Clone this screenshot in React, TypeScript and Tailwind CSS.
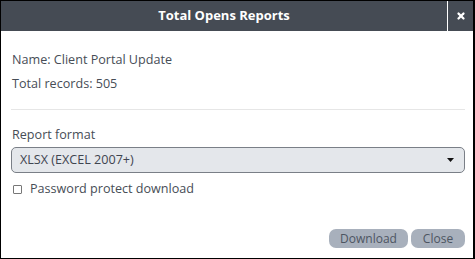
import { X } from 'lucide-react'

export default function App() {
  return (
    <div className="w-[475px] h-[259px] bg-white border border-black border-r-2 flex flex-col font-['Open_Sans',sans-serif] text-[#474d56]">
      {/* header */}
      <div className="h-[30px] bg-[#454b54] flex items-stretch shrink-0">
        <div className="flex-1 flex items-center justify-center text-white font-bold text-[13px]">
          Total Opens Reports
        </div>
        <div className="w-px bg-white" />
        <button className="w-[25px] flex items-center justify-center text-white">
          <X className="w-[10px] h-[10px]" strokeWidth={5.5} />
        </button>
      </div>

      <div className="flex-1 flex flex-col pl-[10px] pr-[8px] pt-[19px] text-[12.6px]">
        <div className="leading-[20px] pl-px">Name: Client Portal Update</div>
        <div className="leading-[20px] mt-1 pl-px">Total records: 505</div>

        <div className="h-px bg-[#e6e6e6] mt-[15px]" />

        <div className="leading-[20px] mt-[15px] pl-px">Report format</div>
        <div className="mt-[2px] h-[26px] rounded-[5px] border border-[#7a7f87] bg-[#e4e7eb] flex items-center justify-between pl-[8px] pr-[10px]">
          <span className="text-[#3f4550]">XLSX (EXCEL 2007+)</span>
          <svg width="7" height="4" viewBox="0 0 7 4">
            <path d="M0 0h7L3.5 4z" fill="#111" />
          </svg>
        </div>

        <label className="flex items-center gap-[8px] mt-[6px] leading-[20px]">
          <span className="w-[9px] h-[9px] ml-[2px] border border-[#777] rounded-[1px] bg-white" />
          Password protect download
        </label>

        <div className="flex-1" />

        <div className="flex justify-end gap-[3px] mb-[10px] text-[12px]">
          <button className="w-[79px] h-[19px] rounded-[7px] bg-[#a8b0bc] text-[#4d5562] leading-none">
            Download
          </button>
          <button className="w-[54px] h-[19px] rounded-[7px] bg-[#a8b0bc] text-[#4d5562] leading-none">
            Close
          </button>
        </div>
      </div>
    </div>
  )
}
